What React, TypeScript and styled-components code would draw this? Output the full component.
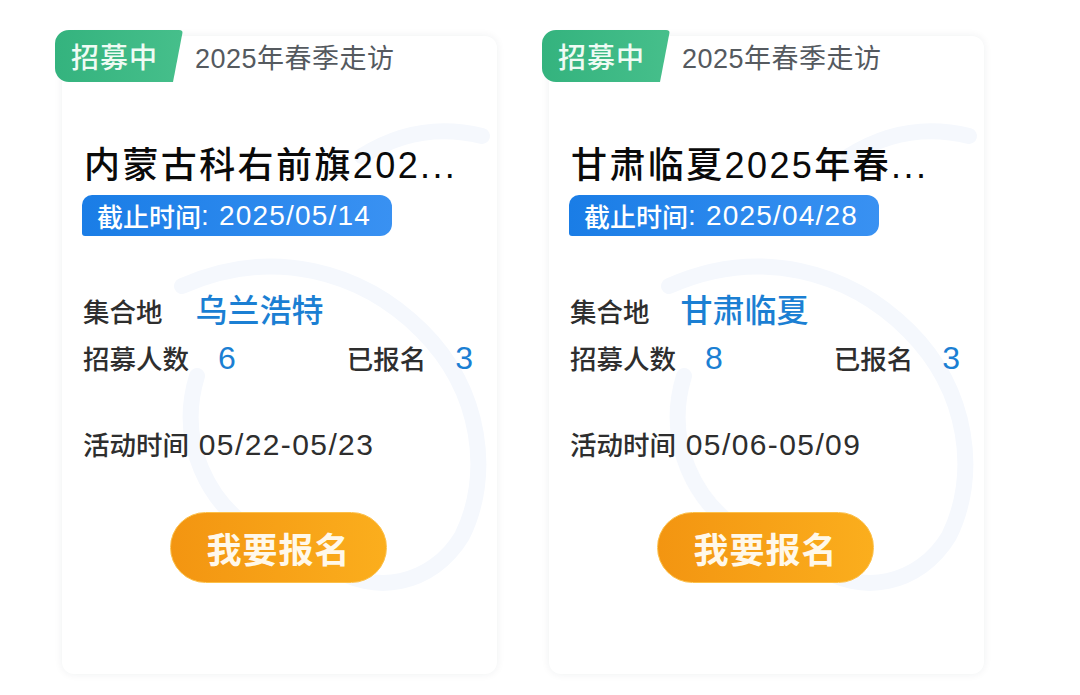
import React from 'react';
import styled, { createGlobalStyle } from 'styled-components';

const GlobalStyle = createGlobalStyle`
  html, body {
    margin: 0;
    padding: 0;
    background: #ffffff;
  }
  body {
    font-family: "Liberation Sans", "Noto Sans CJK SC", sans-serif;
    -webkit-font-smoothing: antialiased;
  }
`;

interface Trip {
  tag: string;
  title: string;
  deadline: string;
  place: string;
  quota: number;
  signed: number;
  period: string;
  placeGap: number;
}

// titles are shown already shortened, as the list does
const trips: Trip[] = [
  {
    tag: '2025年春季走访',
    title: '内蒙古科右前旗202...',
    deadline: '2025/05/14',
    place: '乌兰浩特',
    quota: 6,
    signed: 3,
    period: '05/22-05/23',
    placeGap: 33,
  },
  {
    tag: '2025年春季走访',
    title: '甘肃临夏2025年春...',
    deadline: '2025/04/28',
    place: '甘肃临夏',
    quota: 8,
    signed: 3,
    period: '05/06-05/09',
    placeGap: 31,
  },
];

const Page = styled.div`
  display: flex;
  gap: 52px;
  padding: 36px 0 0 62px;
  height: 695px;
  box-sizing: border-box;
  overflow: hidden;
`;

const Card = styled.div`
  position: relative;
  width: 435px;
  height: 638px;
  box-sizing: border-box;
  padding: 0 24px 0 20px;
  background: #fff;
  border-radius: 12px;
  box-shadow: 0 0 9px rgba(30, 40, 60, 0.07);
  display: flex;
  flex-direction: column;
`;

const Watermark = styled.svg`
  position: absolute;
  inset: 0;
  width: 100%;
  height: 100%;
  pointer-events: none;
`;

const Header = styled.div`
  position: relative;
  display: flex;
  align-items: center;
  gap: 12px;
  margin: -6px 0 0 -27px;
`;

const Status = styled.span`
  display: inline-flex;
  align-items: center;
  height: 52px;
  width: 128px;
  box-sizing: border-box;
  padding-left: 16px;
  background: linear-gradient(90deg, #34b37e, #46bf8b);
  color: #effbf4;
  font-size: 28px;
  font-weight: 500;
  letter-spacing: 1px;
  border-radius: 14px 4px 6px 14px;
  clip-path: polygon(0 0, 100% 0, calc(100% - 10px) 100%, 0 100%);
`;

const Tag = styled.span`
  font-size: 27px;
  letter-spacing: 0.5px;
  color: #555a5f;
`;

const Title = styled.h2`
  position: relative;
  margin: 62px 0 0 2px;
  font-size: 36px;
  line-height: 43px;
  letter-spacing: 2.4px;
  font-weight: 500;
  color: #0a0a0a;
  white-space: nowrap;
`;

const Deadline = styled.div`
  position: relative;
  align-self: flex-start;
  margin-top: 8px;
  height: 41px;
  width: 310px;
  box-sizing: border-box;
  display: flex;
  align-items: center;
  padding-left: 15px;
  background: linear-gradient(90deg, #1a7de6, #3991f2);
  color: #fff;
  font-size: 26px;
  font-weight: 500;
  border-radius: 10px 12px 12px 3px;
  white-space: pre;
`;

const Num = styled.span<{ $size: number; $spacing?: number }>`
  font-size: ${(p) => p.$size}px;
  letter-spacing: ${(p) => p.$spacing ?? 0}px;
`;

const Row = styled.div<{ $top: number }>`
  position: relative;
  display: flex;
  align-items: center;
  justify-content: space-between;
  height: 40px;
  margin-top: ${(p) => p.$top}px;
  margin-left: 1px;
`;

const Pair = styled.div<{ $gap: number }>`
  display: flex;
  align-items: baseline;
  gap: ${(p) => p.$gap}px;
`;

const Label = styled.span`
  font-size: 26.5px;
  font-weight: 500;
  color: #2e2e2e;
`;

const Value = styled.span<{ $size: number }>`
  font-size: ${(p) => p.$size}px;
  font-weight: 500;
  color: #1b7fd3;
`;

const Period = styled.span`
  font-size: 26.5px;
  font-weight: 500;
  color: #2e2e2e;
  white-space: pre;
`;

const SignUp = styled.button`
  position: relative;
  align-self: center;
  margin: 49px 0 0 2px;
  width: 217px;
  height: 71px;
  border: 1px solid #fcc04a;
  border-radius: 36px;
  background: linear-gradient(90deg, #f39511, #fbae1d);
  color: #fff8ea;
  font-family: "Liberation Sans", "Noto Sans CJK SC", sans-serif;
  font-size: 35px;
  font-weight: 700;
  letter-spacing: 1px;
  cursor: pointer;
`;

const TripCard: React.FC<{ trip: Trip }> = ({ trip }) => (
  <Card>
    <Watermark viewBox="0 0 435 638" fill="none">
      <g stroke="#f5f8fd" strokeWidth="16" strokeLinecap="round">
        <path d="M300 120 C340 95 380 90 420 100" />
        <path d="M120 250 C210 210 300 235 360 295 C420 355 430 440 400 500 C370 550 310 560 270 530" />
        <path d="M135 340 C115 405 145 470 200 500" />
      </g>
    </Watermark>
    <Header>
      <Status>招募中</Status>
      <Tag>{trip.tag}</Tag>
    </Header>
    <Title>{trip.title}</Title>
    <Deadline>
      截止时间<Num $size={28} $spacing={1.2}>: {trip.deadline}</Num>
    </Deadline>
    <Row $top={52}>
      <Pair $gap={trip.placeGap}>
        <Label>集合地</Label>
        <Value $size={32}>{trip.place}</Value>
      </Pair>
    </Row>
    <Row $top={9}>
      <Pair $gap={29}>
        <Label>招募人数</Label>
        <Value $size={32}>{trip.quota}</Value>
      </Pair>
      <Pair $gap={29}>
        <Label>已报名</Label>
        <Value $size={32}>{trip.signed}</Value>
      </Pair>
    </Row>
    <Row $top={46}>
      <Period>
        活动时间<Num $size={30} $spacing={1.4}> {trip.period}</Num>
      </Period>
    </Row>
    <SignUp type="button">我要报名</SignUp>
  </Card>
);

export default function App() {
  return (
    <>
      <GlobalStyle />
      <Page>
        {trips.map((t) => (
          <TripCard key={t.deadline} trip={t} />
        ))}
      </Page>
    </>
  );
}
